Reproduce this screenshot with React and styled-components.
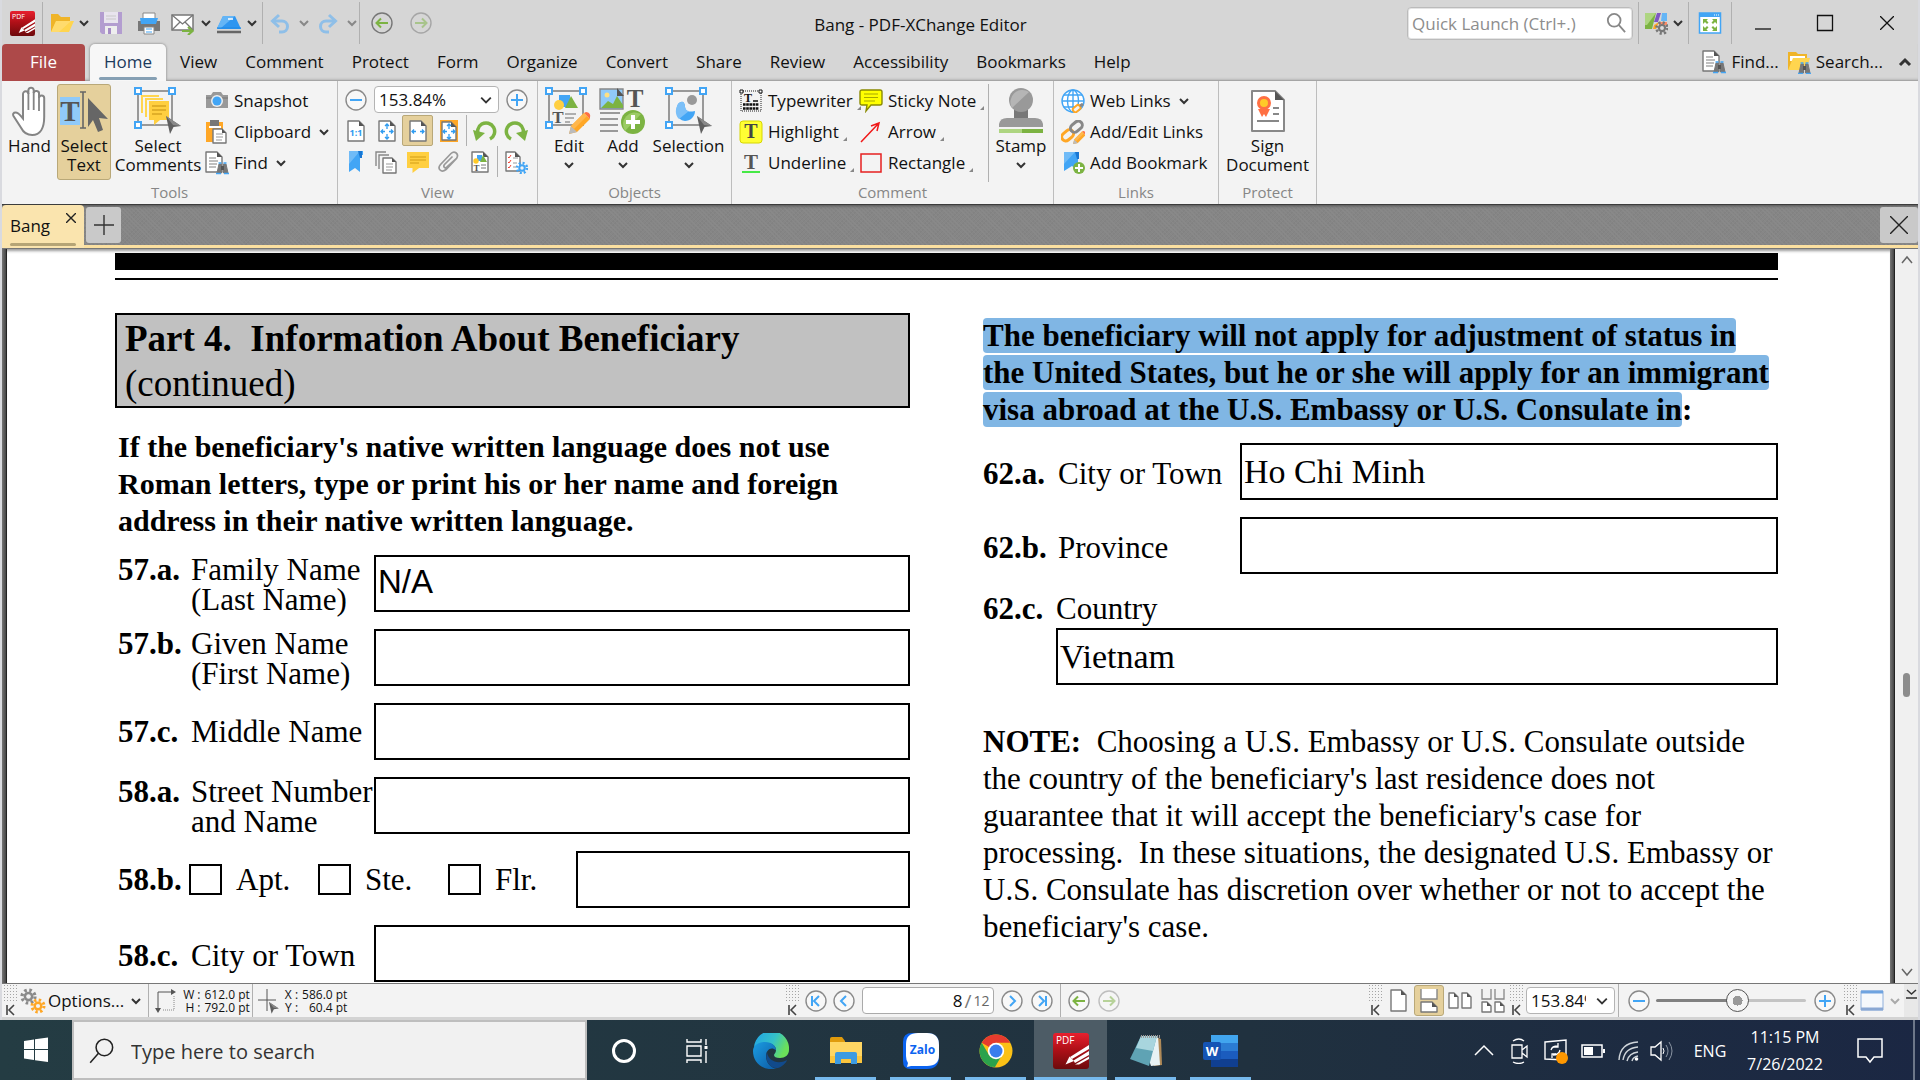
import React from "react";
import styled, { createGlobalStyle, css } from "styled-components";

const UI = `"Open Sans", "Noto Sans", sans-serif`;
const SERIF = `"Liberation Serif", "Times New Roman", serif`;

const Global = createGlobalStyle`
  * { box-sizing: border-box; }
  html, body { margin: 0; height: 100%; overflow: hidden; }
  body { background: #d9dadf; font-family: ${UI}; font-size: 17px; color: #111; }
  button, input, select { font-family: inherit; font-size: inherit; color: inherit; margin: 0; }
  button { border: 0; padding: 0; background: none; cursor: default; }
  svg { display: block; flex: none; }
`;

/* ---------- icons ---------- */
const Svg = ({ w = 24, h = w, box = `0 0 ${w} ${h}`, children, ...rest }) => (
  <svg width={w} height={h} viewBox={box} fill="none" aria-hidden="true" {...rest}>{children}</svg>
);
const Chevron = ({ color = "#333", w = 10, sw = 2 }) => (
  <Svg w={w} h={w} box="0 0 10 10"><path d="M1 3l4 4 4-4" stroke={color} strokeWidth={sw} /></Svg>
);
const Gear = ({ x, y, r, color, hole = "#f3f3f3" }) => (
  <g>
    <circle cx={x} cy={y} r={r} stroke={color} strokeWidth={r * 0.5} strokeDasharray={`${r * 0.3927} ${r * 0.3927}`} />
    <circle cx={x} cy={y} r={r * 0.75} fill={color} />
    <circle cx={x} cy={y} r={r * 0.35} fill={hole} />
  </g>
);
const PageShape = ({ x = 0, y = 0, w = 15, h = 20, fill = "#fff", color = "#777", sw = 1.4, k = 5 }) => (
  <g transform={`translate(${x} ${y})`}>
    <path d={`M0 0H${w - k}L${w} ${k}V${h}H0Z`} fill={fill} stroke={color} strokeWidth={sw} strokeLinejoin="round" />
    <path d={`M${w - k} 0L${w} ${k}H${w - k}Z`} fill="#555" />
  </g>
);
const Binoculars = ({ x, y }) => (
  <g transform={`translate(${x} ${y})`}>
    <path d="M1 11L3 2H5.500V11ZM12 11L10 2H7.500V11Z" fill="#777" stroke="#777" />
    <path d="M5 4h3v4H5z" fill="#555" />
    <path d="M2.500 1h3M7.500 1h3M0 11.500h5M8 11.500h5" stroke="#42a5f5" strokeWidth="1.500" />
  </g>
);
const Handles = ({ s = 34 }) => (
  <g>
    <rect x="4" y="4" width={s} height={s} stroke="#999" strokeWidth="2" />
    {[[4, 4], [4 + s, 4], [4, 4 + s]].map(([x, y], i) => (
      <rect key={i} x={x - 3} y={y - 3} width="6" height="6" fill="#fff" stroke="#42a5f5" strokeWidth="2" />
    ))}
  </g>
);
const Cursor = ({ x, y, s = 1 }) => (
  <g transform={`translate(${x} ${y}) scale(${s})`}>
    <path d="M0 0L15 10L7.500 11L4 18Z" fill="#5f5f5f" /><path d="M0 0L15 10L7 9Z" fill="#888" />
  </g>
);
const SerifT = ({ x, y, size = 20, color = "#555" }) => (
  <text x={x} y={y} fontFamily="Liberation Serif, serif" fontWeight="bold" fontSize={size} fill={color} textAnchor="middle">T</text>
);

const AppLogo = ({ w = 24, h = w }) => (
  <Svg w={w} h={h} box="0 0 36 36">
    <defs><linearGradient id="pdfred" x1="0" y1="0" x2="0" y2="1"><stop offset="0" stopColor="#e8202e" /><stop offset=".45" stopColor="#b01018" /><stop offset="1" stopColor="#6d0a0c" /></linearGradient></defs>
    <rect width="36" height="36" rx="3" fill="url(#pdfred)" />
    <text x="3" y="11" fontFamily="Open Sans, sans-serif" fontSize="10" fill="#fff">PDF</text>
    <path d="M12.500 31.500l4-8 4.500 4.500z" fill="#fff" />
    <path d="M17 24L36 12v4L19 26zM20.500 27.500L36 18v4L22 30z" fill="#fff" />
    <path d="M22 31.500h4L36 26v-2.500z" fill="#fff" />
  </Svg>
);
const Folder = () => (
  <Svg w={24}><path d="M1 21V3h7l3 3h9v4L5 21z" fill="#efb428" /><path d="M6 10h18l-5 11H1z" fill="#ffd54f" /><path d="M6 10h15L9 21H1z" fill="#ffe082" opacity=".6" /></Svg>
);
const Save = () => (
  <Svg w={24}><path d="M1 1h22v22H3l-2-2z" fill="#b39dd0" /><rect x="5" y="1" width="14" height="11" fill="#e8e4ee" /><path d="M7 5h10M7 8h10" stroke="#c8c8c8" /><rect x="6" y="15" width="12" height="8" fill="#eee" /><rect x="9" y="17" width="3" height="6" fill="#a58cc5" /></Svg>
);
const Print = () => (
  <Svg w={24}><path d="M6 2h12v7H6z" fill="#fff" stroke="#888" /><path d="M1 10h22v10H1z" fill="#777" /><path d="M4 13h15l2-6H3z" fill="#42a5f5" /><path d="M7 16h10v7H7z" fill="#fff" stroke="#888" /><path d="M9 18h6M9 21h6" stroke="#42a5f5" /></Svg>
);
const Mail = () => (
  <Svg w={24}><path d="M1 4h21v15H1z" fill="#fff" stroke="#777" strokeWidth="1.500" /><path d="M1 4l10.500 9L22 4M1 19l8-8M22 19l-8-8" stroke="#777" strokeWidth="1.300" /><path d="M11 20h10M17 16l4.500 4-4.500 4" stroke="#7cb342" strokeWidth="2.200" /></Svg>
);
const Scan = () => (
  <Svg w={24}><path d="M6 5h12l6 13H0z" fill="#2f96f0" /><path d="M6 5h12L4 17H0z" fill="#64b5f6" /><path d="M11 8h5" stroke="#fff" strokeWidth="1.500" /><path d="M0 21h24" stroke="#666" strokeWidth="2.500" /><path d="M0 17h24" stroke="#1e88e5" /></Svg>
);
const Undo = ({ flip }) => (
  <Svg w={22}><g transform={flip ? "matrix(-1 0 0 1 22 0)" : undefined} stroke="#8fbfe8" strokeWidth="3"><path d="M2 9h10a5.500 5.500 0 010 11H9" /><path d="M9 3L2.500 9 9 15" /></g></Svg>
);
const CircleIcon = ({ d, color = "#42a5f5", ring = "#8a8a8a", fill = "#f8f8f8", sw = 2 }) => (
  <Svg w={22} h={22} box="0 0 22 22"><circle cx="11" cy="11" r="10" fill={fill} stroke={ring} strokeWidth="1.400" /><path d={d} stroke={color} strokeWidth={sw} /></Svg>
);
const ARROW_L = "M17 11H6M10 6.500L5.500 11l4.500 4.500";
const ARROW_R = "M5 11h11M12 6.500l4.500 4.500-4.500 4.500";
const MINUS = "M5 11h12";
const PLUS = "M5 11h12M11 5v12";

const Magnifier = ({ w = 22, color = "#888", flip, sw = 2 }) => (
  <Svg w={w} h={w} box="0 0 22 22"><g transform={flip ? "matrix(-1 0 0 1 22 0)" : undefined} stroke={color} strokeWidth={sw}><circle cx="9" cy="8" r="7" /><path d="M14 13l7 8" /></g></Svg>
);
const ThemeIcon = () => (
  <Svg w={24}><path d="M1 2h11L8 18H1z" fill="#7cb342" /><path d="M1 2h11L3 14H1z" fill="#aed581" /><path d="M13 2h4l-3 9h-4z" fill="#7e57c2" /><path d="M18 2h5v8h-6z" fill="#64b5f6" /><path d="M10 14l5-3-3 7H9z" fill="#ffa726" /><path d="M15 11h8v3h-8z" fill="#ff8a65" /><Gear x={18} y={17} r={5.500} color="#777" hole="#ddd" /></Svg>
);
const FullScreen = () => (
  <Svg w={24}><path d="M1.500 2h21v20h-21z" fill="#fff" stroke="#42a5f5" strokeWidth="1.500" /><path d="M1 2h22v4H1z" fill="#42a5f5" /><path d="M16 4h5" stroke="#fff" strokeDasharray="1 1" /><path d="M5 8h5l-1.500 1.500 2 2-1.500 1.500-2-2L5 13zM19 8h-5l1.500 1.500-2 2 1.500 1.500 2-2L19 13zM5 20h5l-1.500-1.500 2-2L9 15l-2 2-2-2zM19 20h-5l1.500-1.500-2-2L15 15l2 2 2-2z" fill="#7cb342" /></Svg>
);
const FindIcon = () => (
  <Svg w={24}><PageShape x={1} y={1} w={16} h={20} /><path d="M4 7h7M4 10h9M4 13h8M4 16h7" stroke="#aaa" strokeWidth="1.300" /><Binoculars x={11} y={11} /></Svg>
);
const SearchIcon = () => (
  <Svg w={24}><path d="M1 20V2h8l2 2h9v4z" fill="#efb428" /><path d="M3 6h15v5H3z" fill="#fff" /><path d="M6 8h17l-4 12H1z" fill="#ffd54f" /><Binoculars x={11} y={12} /></Svg>
);
const HandIcon = () => (
  <Svg w={36} h={50} box="0 0 36 50"><path d="M11 30V8a2.700 2.700 0 015.400 0V4a2.700 2.700 0 015.300 0v3a2.700 2.700 0 015.300 1v4a2.600 2.600 0 015.200 0V31c0 11-4 18-12 18-6 0-9-3-11-7L1.500 30c-1-2 0-3.500 2-3.500 3 0 5 3 7.500 6z" fill="#fff" stroke="#848484" strokeWidth="2" /><path d="M16.400 7v17M21.700 6v18M27 11v14" stroke="#848484" strokeWidth="1.800" /></Svg>
);
const SelectTextIcon = () => (
  <Svg w={48} h={48}><rect y="10" width="20" height="28" fill="#90caf9" /><SerifT x={10} y={34} size={29} /><path d="M23 5v36M20 5h6M20 41h6" stroke="#666" strokeWidth="1.600" /><path d="M28 11l20 21-9-1 4 12-5 2-5-12-5 7z" fill="#666" /></Svg>
);
const Bubble = ({ x = 0, y = 0, w = 22, h = 18, fill = "#ffcf40", stroke = "none" }) => (
  <path transform={`translate(${x} ${y})`} d={`M0 0H${w}V${h - 5}H${w * 0.55}L${w * 0.25} ${h}V${h - 5}H0Z`} fill={fill} stroke={stroke} />
);
const SelectCommentsIcon = () => (
  <Svg w={48} h={48}><Handles /><path d="M7 8h18v2H9v16H7zM11 11h18v2H13v17h-2z" fill="#ffd54f" /><Bubble x={15} y={14} w={20} h={24} /><path d="M18 19h14M18 23h14M18 27h10" stroke="#d8a520" strokeWidth="1.500" /><Cursor x={32} y={29} /></Svg>
);
const Camera = () => (
  <Svg w={24}><path d="M1 6h5l2-3h8l2 3h5v13H1z" fill="#999" /><path d="M1 9h22" stroke="#777" /><circle cx="12" cy="12" r="6" fill="#eee" /><circle cx="12" cy="12" r="4.500" fill="#42a5f5" /></Svg>
);
const Clipboard = () => (
  <Svg w={24}><path d="M1 2h17v20H1z" fill="#ffa726" /><path d="M5 0h9v6H5z" fill="#777" /><path d="M4 6h12v2H4z" fill="#fff" /><PageShape x={8} y={9} w={13} h={14} k={4} /><path d="M11 14h7M11 17h7M11 20h6" stroke="#999" /></Svg>
);
const ViewPage = ({ children, bg }) => (
  <Svg w={24}>{bg && <path d="M3 1h18v22H3z" fill={bg} />}<PageShape x={bg ? 5 : 4} y={bg ? 3 : 2} w={bg ? 14 : 16} h={bg ? 18 : 20} />{children}</Svg>
);
const FourWay = () => <path d="M12 5v5M10 7l2-2 2 2M12 20v-5M10 18l2 2 2-2M6 12.500h4M8 10.500l-2 2 2 2M18 12.500h-4M16 10.500l2 2-2 2" stroke="#2e9bf0" strokeWidth="1.300" />;
const Rotate = ({ flip }) => (
  <Svg w={24}><g transform={flip ? "matrix(-1 0 0 1 24 0)" : undefined}><path d="M6 17A8.500 8.500 0 1117 20" stroke="#7cb342" strokeWidth="3.500" /><path d="M0 11l12 3-9 8z" fill="#7cb342" /></g></Svg>
);
const BookmarkIcon = ({ plus }) => (
  <Svg w={24}><path d={plus ? "M3 1h14v19l-6-5-8 5z" : "M5 1h14v4h-3v17l-5-4-6 4z"} fill="#42a5f5" /><path d={plus ? "M3 1h11L3 13z" : "M5 1h11L5 14z"} fill="#90caf9" opacity=".6" /><path d="M14 1h4v7h-2z" fill="#1976d2" />{plus && <g><circle cx="18" cy="17" r="6" fill="#7cb342" /><path d="M14 17h8M18 13v8" stroke="#fff" strokeWidth="2" /></g>}</Svg>
);
const PagesIcon = () => (
  <Svg w={24}><path d="M1 16V2h10M4 19V5h10" stroke="#888" strokeWidth="1.400" /><PageShape x={8} y={8} w={13} h={15} k={4} /><path d="M11 14h7M11 17h7M11 20h6" stroke="#999" /></Svg>
);
const CommentIcon = () => (
  <Svg w={24}><Bubble x={1} y={2} w={22} h={21} /><path d="M4 7h16M4 10h16M4 13h9" stroke="#d19d17" /></Svg>
);
const Clip = () => (
  <Svg w={24}><path d="M20 8L9 19.500c-5 4-9-1-5.500-5L14 3.500c3.500-3.500 8.500.5 5.500 5L10 17c-2.500 2-4-.5-2.500-2.500l8-8" stroke="#999" strokeWidth="1.700" /></Svg>
);
const ContentPage = () => (
  <Svg w={24}><PageShape x={4} y={2} w={16} h={20} /><path d="M9 5h5v6H9z" fill="#42a5f5" /><path d="M15 5l4 7h-7z" fill="#7cb342" /><circle cx="8" cy="11" r="2.700" fill="#ffca28" /><SerifT x={8.500} y={21} size={9} /><path d="M13 15h5M13 18h5" stroke="#777" /></Svg>
);
const TaskPage = () => (
  <Svg w={24}><PageShape x={2} y={2} w={14} h={19} /><path d="M4 7l1 1 2-3M4 12l1 1 2-3M4 17l1 1 2-3" stroke="#f44336" /><path d="M9 8h5M9 13h4M9 17h3" stroke="#999" /><Gear x={18} y={18} r={5} color="#42a5f5" /></Svg>
);
const Shapes = () => <g><path d="M14 8h11v12H14z" fill="#42a5f5" /><path d="M26 9l7 12H20z" fill="#7cb342" /><circle cx="14" cy="18" r="5" fill="#ffcf40" /></g>;
const Pencil = ({ x, y, s = 1 }) => (
  <g transform={`translate(${x} ${y}) scale(${s})`}><path d="M0 22l2-8L15 1l6 6L8 20z" fill="#ffa726" /><path d="M15 1l2-1c3 0 5 3 4 5v2z" fill="#ff7043" /><path d="M0 22l2-8 6 6z" fill="#bbb" /><path d="M2 14L15 1l3 3L5 17z" fill="#ffb74d" /></g>
);
const EditIcon = () => (
  <Svg w={48} h={48}><Handles /><Shapes /><SerifT x={13} y={36} size={17} /><path d="M20 27h11M20 31h9M20 35h5" stroke="#999" strokeWidth="1.600" /><Pencil x={24} y={25} /></Svg>
);
const AddIcon = () => (
  <Svg w={48} h={48}><path d="M1 2h23v20H1z" fill="#90caf9" stroke="#888" strokeWidth="1.400" /><circle cx="8" cy="8" r="2.500" fill="#ffe082" /><path d="M2 21l7-7 5 3 4-8 6 9v3z" fill="#7cb342" /><path d="M18 1l7 8h-7z" fill="#555" /><SerifT x={36} y={20} size={25} /><path d="M1 26h20M1 32h18M1 38h18M1 44h18" stroke="#999" strokeWidth="2" /><circle cx="34" cy="35" r="12" fill="#7cb342" /><path d="M26 44A12 12 0 0142 27z" fill="#9ccc65" /><path d="M27 35h14M34 28v14" stroke="#fff" strokeWidth="4" /></Svg>
);
const SelectionIcon = () => (
  <Svg w={48} h={48}><Handles /><path d="M13 17c4-4 7-2 7 3 1 5 4 5 10 4 0 6-5 10-10 10-9-1-10-11-7-17z" fill="#42a5f5" /><path d="M13 17c4-4 7-2 7 3 1 3 2 4 4 4L14 32c-4-4-4-10-1-15z" fill="#7cc0f8" /><circle cx="27" cy="13" r="5" fill="#999" /><Cursor x={32} y={29} /></Svg>
);
const Typewriter = () => (
  <Svg w={24}><rect x="2" y="2" width="20" height="20" stroke="#222" strokeDasharray="1 1" /><path d="M1 1h3v3H1zM20 1h3v3h-3z" fill="#fff" stroke="#111" /><SerifT x={9} y={13} size={12} color="#111" /><path d="M14 12h5" stroke="#111" strokeWidth="1.500" /><path d="M4 15.500h16M4 19.500h16" stroke="#111" strokeWidth="2.600" strokeDasharray="2.600 .6" /></Svg>
);
const HighlightIcon = () => <Svg w={24}><rect x="1" y="1" width="22" height="22" rx="3" fill="#ff3" stroke="#d6d600" /><SerifT x={12} y={18} size={20} color="#444" /></Svg>;
const UnderlineIcon = () => <Svg w={24}><SerifT x={12} y={18} size={21} /><path d="M3 21h18" stroke="#1be61b" strokeWidth="1.600" /></Svg>;
const Sticky = () => <Svg w={24}><path d="M3 1h18q2 0 2 2v11q0 2-2 2h-9l-5 6 1-6H3q-2 0-2-2V3q0-2 2-2z" fill="#ff0" stroke="#8a8a00" strokeWidth="1.400" /><path d="M5 5h14M5 8.500h14M5 12h11" stroke="#a8a800" strokeWidth="1.200" /></Svg>;
const ArrowIcon = () => <Svg w={24}><path d="M2 22L19 4M12 6l8-3-2 8" stroke="#f01818" strokeWidth="1.500" /></Svg>;
const RectIcon = () => <Svg w={24}><path d="M2 3h20v18H2z" stroke="#e62020" strokeWidth="1.500" /></Svg>;
const StampIcon = () => (
  <Svg w={48} h={48}><path d="M17 22h14v10H17z" fill="#777" /><circle cx="24" cy="13" r="12" fill="#999" /><path d="M15 21A12 12 0 0132 5z" fill="#b5b5b5" /><path d="M2 40v-3q1-6 8-6h28q7 0 8 6v3z" fill="#999" /><path d="M2 44h44" stroke="#7cb342" strokeWidth="4" /><path d="M2 44h23" stroke="#aed581" strokeWidth="4" /></Svg>
);
const WebIcon = () => (
  <Svg w={24}><circle cx="12" cy="12" r="11" fill="#fff" /><g stroke="#42a5f5" strokeWidth="1.400"><circle cx="12" cy="12" r="11" /><ellipse cx="12" cy="12" rx="5.500" ry="11" /><path d="M1 12h22M12 1v22M3 6h18M3 18h18" /></g><rect x="12" y="17" width="8" height="5" rx="2" transform="rotate(-40 16 20)" stroke="#ffa726" strokeWidth="2" fill="#f3f3f3" /><path d="M19 17l3-2" stroke="#888" strokeWidth="3" /></Svg>
);
const LinkIcon = () => (
  <Svg w={24}><g strokeWidth="3"><rect x="0" y="11" width="13" height="8" rx="4" transform="rotate(-40 7 15)" stroke="#ffa726" /><rect x="9" y="3" width="13" height="8" rx="4" transform="rotate(-40 15 7)" stroke="#888" /></g><Pencil x={12} y={11} s={0.600} /></Svg>
);
const SignIcon = () => (
  <Svg w={48} h={48}><PageShape x={8} y={4} w={32} h={40} k={9} sw={2} color="#888" /><path d="M14 22l4 8 2-3 2 3 4-8z" fill="#ff7043" /><circle cx="20" cy="16" r="5.500" fill="#ffca28" stroke="#ff7043" strokeWidth="3" /><path d="M29 21h6M29 27h6M13 34h22" stroke="#888" strokeWidth="1.800" /></Svg>
);
const Grip = () => (
  <Svg w={14} h={32}>
    <defs><pattern id="dots" width="3" height="3" patternUnits="userSpaceOnUse"><rect width="1" height="1" fill="#a5a5a5" /></pattern></defs>
    <rect width="14" height="17" fill="url(#dots)" /><path d="M3 20v10M10 20l-5 5 5 5" stroke="#444" strokeWidth="1.600" />
  </Svg>
);
const OptionsIcon = () => <Svg w={26} h={26}><Gear x={8.500} y={8.500} r={6.500} color="#8a8a8a" /><Gear x={18} y={18} r={6} color="#ffa726" /></Svg>;
const SizeIcon = () => <Svg w={22} h={26}><path d="M3 21V4h14" stroke="#555" /><path d="M16 1l5 3-5 3zM0 20h6l-3 5z" fill="#555" /><path d="M8 22h11V8" stroke="#888" strokeDasharray="1 1" /></Svg>;
const CrossIcon = () => <Svg w={22} h={26}><path d="M9 1v22M0 12h18" stroke="#555" /><Cursor x={11} y={14} s={0.650} /></Svg>;
const SinglePage = () => <Svg w={18} h={24}><PageShape x={1} y={1} w={15} h={21} /></Svg>;
const ContinuousPage = () => <Svg w={18} h={24}><path d="M1 0v10h16V0" fill="#fff" stroke="#888" strokeWidth="1.400" /><PageShape x={1} y={13} w={16} h={10} /></Svg>;
const TwoPages = () => <Svg w={24} h={24}><PageShape x={1} y={4} w={9} h={15} k={4} /><PageShape x={14} y={4} w={9} h={15} k={4} /></Svg>;
const FourPages = () => <Svg w={24} h={24}><path d="M1 0v10h9V0M14 0v10h9V0" stroke="#888" strokeWidth="1.300" /><PageShape x={1} y={13} w={9} h={10} k={4} /><PageShape x={14} y={13} w={9} h={10} k={4} /></Svg>;
const PanelIcon = () => <Svg w={24} h={24}><path d="M1 2h22v19H1z" fill="#f5f8fc" stroke="#8fb0dc" /><path d="M1 3h22" stroke="#6ea3e0" strokeWidth="3" /><path d="M1 20h22" stroke="#8aa8d4" strokeWidth="3" /></Svg>;

const EdgeIcon = () => (
  <Svg w={36} box="0 0 36 36">
    <defs>
      <linearGradient id="eg1" x1="0" y1="0" x2="1" y2=".4"><stop offset="0" stopColor="#1fa2e8" /><stop offset=".6" stopColor="#35c1c8" /><stop offset="1" stopColor="#6be05a" /></linearGradient>
      <linearGradient id="eg2" x1="0" y1="0" x2="1" y2="1"><stop offset="0" stopColor="#1b9de2" /><stop offset="1" stopColor="#0c59a4" /></linearGradient>
    </defs>
    <path d="M1 14A17.500 17.500 0 0136 17c0 5-4 8-9 8-4 0-6-1-6-3 0-1 2-2 2-5 0-4-4-7-9-7-6 0-10 3-13 4z" fill="url(#eg1)" />
    <path d="M0 18c0-6 6-9 12-9 7 0 11 4 11 8-5-4-10 0-10 6 0 7 5 12 11 13C10 38 0 30 0 18z" fill="url(#eg2)" />
    <path d="M14 19c-3 8 3 17 11 16 4-1 8-5 9-8-9 5-19 1-20-8z" fill="#114a8b" />
  </Svg>
);
const ExplorerIcon = () => (
  <Svg w={34} h={30}><path d="M1 3q0-2 2-2h10l3 4v4H1z" fill="#e09b0c" /><path d="M1 6h32v20q0 1-1 1H2q-1 0-1-1z" fill="#ffd663" /><path d="M1 20h32v7H1z" fill="#fbc53d" /><path d="M6 28V18q0-2 2-2h18q2 0 2 2v10h-6v-5H12v5z" fill="#3d9be2" /></Svg>
);
const ZaloIcon = () => (
  <Svg w={36}><path d="M9 0h15q12 0 12 12v12q0 12-12 12H7Q0 36 0 28V9q0-9 9-9z" fill="#0b63f0" /><path d="M15 0h9q12 0 12 12v10q0 11-12 11H8l-4 1 1-4q-2-3-2-7V11Q3 0 15 0z" fill="#fff" /><text x="19.500" y="21" fontFamily="Open Sans, sans-serif" fontWeight="bold" fontSize="12" textAnchor="middle" fill="#0b63f0">Zalo</text></Svg>
);
const ChromeIcon = () => (
  <Svg w={34}><circle cx="17" cy="17" r="16.500" fill="#fbc116" /><path d="M17 17L2.700 8.800A16.500 16.500 0 0131.300 8.800H17z" fill="#e63b2e" /><path d="M2.700 8.800L10 21l7 4-4 8A16.500 16.500 0 012.700 8.800z" fill="#2ba24c" /><path d="M16 33l7-12h-9l-3 11.500z" fill="#2ba24c" /><circle cx="17" cy="17" r="8.200" fill="#fff" /><circle cx="17" cy="17" r="6.500" fill="#3a7ded" /></Svg>
);
const NotepadIcon = () => (
  <Svg w={34} h={34}><path d="M27 3l5 2 1 26-8 1z" fill="#b08a58" /><path d="M12 2h17l2 29-9 1z" fill="#e8f2f4" /><path d="M12 2h16l-8 30L1 25z" fill="#5fa3b4" /><path d="M12 2h16l-4 15L7 14z" fill="#a8d5de" /><path d="M12 2.500h19" stroke="#999" strokeWidth="3" strokeDasharray="1 1" /></Svg>
);
const WordIcon = () => (
  <Svg w={36} h={34}><rect x="8" y="1" width="27" height="32" rx="2" fill="#1b5cbe" /><path d="M8 1h27v8H8z" fill="#41a5ee" /><path d="M8 9h27v8H8z" fill="#2b7cd3" /><path d="M8 25h27v8H8z" fill="#103f91" /><rect y="8" width="18" height="18" rx="2" fill="#1554b5" /><text x="9" y="22" fontFamily="Open Sans, sans-serif" fontWeight="bold" fontSize="13" fill="#fff" textAnchor="middle">W</text></Svg>
);
const StartIcon = () => <Svg w={26} h={26}><path d="M1 4l10-1.500V12H1zM12 2.300L25 .5V12H12zM1 13h10v10L1 21.500zM12 13h13v12l-13-1.700z" fill="#fff" /></Svg>;
const TaskViewIcon = () => <Svg w={26} h={26}><path d="M3 1v3h14V1M3 8h14v10H3zM3 25v-3h14v3M22 1v6M22 13v12" stroke="#fff" strokeWidth="1.400" /><path d="M20.500 8h3v3h-3z" fill="#fff" /></Svg>;
const CortanaIcon = () => <Svg w={26} h={26}><circle cx="13" cy="13" r="10.500" stroke="#fff" strokeWidth="3" /></Svg>;

/* ---------- window frame ---------- */
const Screen = styled.div`display: flex; flex-direction: column; height: 100vh;`;
const Win = styled.div`
  flex: 1; min-height: 0; display: flex; flex-direction: column;
  margin: 0 2px; padding-top: 2px; background: #d6d6d6; border-bottom: 3px solid #d3d3d3;
`;
const TitleBar = styled.header`display: flex; align-items: center; height: 42px; flex: none;`;
const Title = styled.h1`flex: 1; margin: 0; padding-top: 2px; font-size: 17px; font-weight: 400; text-align: center; white-space: nowrap;`;
const Cluster = styled.div`
  display: flex; align-items: center; height: ${p => p.$h || "auto"};
  gap: ${p => p.$gap || 0}px; padding: 0 ${p => p.$pr || 0}px 0 ${p => p.$pl || 0}px;
`;
const Divider = styled.span`width: 1px; flex: none; align-self: stretch; margin: 0 ${p => p.$m || 0}px; background: #b0b0b0;`;
const IconButton = styled.button`
  display: flex; align-items: center; justify-content: center; flex: none;
  width: ${p => p.$w || 24}px; height: ${p => p.$h || 30}px; opacity: ${p => (p.$dim ? 0.5 : 1)};
`;
const Quick = styled.label`
  display: flex; align-items: center; width: 226px; height: 33px; padding: 0 6px 0 4px;
  background: #fff; border: 1px solid #bbb; border-radius: 4px; box-shadow: inset 0 0 0 1px #e4e4e4;
`;
const QuickInput = styled.input`
  flex: 1; min-width: 0; height: 28px; border: 0; padding: 0; outline: 0; background: transparent;
  &::placeholder { color: #8d8d8d; opacity: 1; }
`;

const Menu = styled.nav`display: flex; align-items: stretch; height: 37px; flex: none; box-shadow: inset 0 -1px 0 #a5a5a5, inset 0 -3px 3px -2px #999;`;
const MenuTab = styled.button`
  display: flex; flex-direction: column; align-items: stretch; justify-content: flex-start; text-align: center;
  padding: 3px 14px 0; line-height: 30px; white-space: nowrap;
  ${p => p.$kind === "file" && css`width: 83px; color: #fff; background: #ad4949; border-radius: 4px 4px 0 0; margin-right: 5px;`}
  ${p => p.$kind === "home" && css`
    color: #1c3a5c; background: #f7f7f7; border-radius: 5px 5px 0 0; box-shadow: 0 0 2px 1px #aaa;
    &::after { content: ""; display: block; height: 3px; margin: 0 -5px; border-radius: 2px; background: #86a0b4; }
  `}
`;
const MenuRight = styled.div`margin-left: auto; display: flex; align-items: center; gap: 8px; padding-bottom: 2px;`;
const MenuAction = styled.button`display: flex; align-items: center; gap: 5px; line-height: 24px;`;

/* ---------- ribbon ---------- */
const Ribbon = styled.section`display: flex; height: 124px; flex: none; background: #f3f3f3; border-bottom: 1px solid #3c3c3c;`;
const Group = styled.div`
  flex: 0 0 ${p => p.$w}px; display: flex; flex-direction: column;
  border-right: 1px solid #bdbdbd; padding-top: 3px;
`;
const GroupBody = styled.div`display: flex; align-items: flex-start; height: 98px; padding-left: ${p => p.$pl || 0}px;`;
const GroupName = styled.div`font-size: 15px; line-height: 20px; text-align: center; color: #868686;`;
const Big = styled.button`
  display: flex; flex-direction: column; align-items: center; justify-content: flex-start;
  width: ${p => p.$w}px; height: 96px; padding-top: 1px; line-height: 19px; white-space: nowrap;
  border: 1px solid ${p => (p.$on ? "#b9a878" : "transparent")}; border-radius: 3px;
  background: ${p => (p.$on ? "#e5d09c" : "transparent")};
`;
const BigIcon = styled.span`height: 50px; display: flex; align-items: center;`;
const BigChevron = styled.span`padding-top: 5px;`;
const Column = styled.div`display: flex; flex-direction: column; padding-top: 1px; width: ${p => p.$w}px;`;
const Small = styled.button`display: flex; align-items: center; gap: 5px; height: 31px; white-space: nowrap;`;
const SmallArrow = styled.span`padding-left: 3px;`;
const Corner = styled.span`align-self: flex-end; margin: 0 0 6px -1px; border-left: 4px solid transparent; border-bottom: 4px solid #888;`;
const ViewGrid = styled.div`display: flex; flex-direction: column;`;
const ViewRow = styled.div`display: flex; align-items: center; height: 31px; gap: ${p => p.$gap || 0}px; padding-left: ${p => p.$pl || 0}px;`;
const Cell = styled.button`
  width: 31px; height: 31px; display: flex; align-items: center; justify-content: center; border-radius: 2px;
  border: 1px solid ${p => (p.$on ? "#b9a878" : "transparent")}; background: ${p => (p.$on ? "#e5d09c" : "transparent")};
`;
const Combo = styled.span`
  display: grid; align-items: center; width: ${p => p.$w}px; height: 27px; background: #fff;
  border: 1px solid #b4b4b4; border-radius: 4px;
  > * { grid-area: 1 / 1; }
  > svg { justify-self: end; margin-right: 6px; pointer-events: none; }
`;
const Select = styled.select`
  appearance: none; width: 100%; min-width: 0; height: 25px; border: 0; outline: 0; background: transparent;
  padding: 0 ${p => p.$pr || 24}px 0 4px; line-height: 25px;
`;

/* ---------- document tabs ---------- */
const TabStrip = styled.div`
  display: flex; height: 43px; flex: none; border-bottom: 3px solid #fbe0a0;
  background-color: #868686;
  background-image: repeating-linear-gradient(45deg, #898989 0 1px, transparent 1px 3px), repeating-linear-gradient(-45deg, #828282 0 1px, transparent 1px 3px);
  box-shadow: inset 0 3px 3px -2px #555;
`;
const DocTab = styled.button`
  width: 82px; height: 43px; padding: 5px 8px 0; background: #fae4ae; border-radius: 4px 4px 0 0;
  display: grid; grid-template-columns: 1fr auto; text-align: left;
  &::after { content: ""; grid-column: 1 / 3; height: 3px; border-radius: 2px; background: #b5a476; }
`;
const DocTabName = styled.span`line-height: 31px;`;
const TabClose = styled.span`padding-top: 3px;`;
const StripButton = styled.button`
  display: flex; align-items: center; justify-content: center; width: ${p => p.$w}px; height: 36px;
  margin: 2px 0 0 2px; background: #c9c9c9; border-radius: 3px;
  ${p => p.$end && css`margin-left: auto;`}
`;

/* ---------- document ---------- */
const Viewer = styled.main`flex: 1; min-height: 0; display: flex; border-top: 1px solid #777; border-bottom: 1px solid #777;`;
const Edge = styled.div`width: 5px; flex: none; background: linear-gradient(90deg, #777, #444); border-right: 1px solid #222;`;
const Page = styled.article`
  flex: 1; min-width: 0; overflow: hidden; padding: 4px 112px 0 108px; background: #fff;
  box-shadow: inset 0 4px 3px -2px #999; font-family: ${SERIF}; font-size: 31px; line-height: 37px; color: #000;
`;
const BlackBar = styled.div`height: 17px; background: #000; margin-bottom: 8px;`;
const Rule = styled.div`height: 2px; background: #000; margin-bottom: 33px;`;
const Columns = styled.div`display: grid; grid-template-columns: 1fr 1fr; column-gap: 73px; align-items: start;`;
const PartHead = styled.h2`
  margin: 0 0 20px; height: 95px; padding: 1px 8px; border: 2px solid #000; background: #c1c1c1;
  font-size: 37px; line-height: 45px; white-space: pre;
`;
const Plain = styled.span`font-weight: 400;`;
const Lead = styled.p`margin: 0 0 16px; padding-left: 3px; font-size: 30px; font-weight: 700; white-space: nowrap;`;
const Fields = styled.div`display: flex; flex-direction: column; gap: 17px;`;
const Row = styled.div`
  display: grid; grid-template-columns: ${p => p.$cols || "73px 183px 1fr"}; padding-left: ${p => p.$pl ?? 3}px;
  align-items: ${p => (p.$top ? "start" : "center")}; line-height: 30px; white-space: nowrap; height: 57px;
  > b, > label { padding-top: ${p => (p.$drop ? 4 : 0)}px; }
`;
const Num = styled.b``;
const Box = styled.input`
  width: 100%; height: 57px; min-width: 0; border: 2px solid #000; border-radius: 0; background: #fff; outline: 0;
  padding: 0 2px; font-family: ${SERIF}; font-size: 34px;
  ${p => p.$sans && css`font-family: "Liberation Sans", Arial, sans-serif; font-size: 33px; padding-bottom: 4px;`}
`;
const Tick = styled.input`
  appearance: none; width: 33px; height: 31px; border: 2px solid #000; background: #fff; margin: 0 14px 0 0; flex: none;
`;
const Choices = styled.div`display: grid; grid-template-columns: 129px 130px 1fr;`;
const Choice = styled.label`display: flex; align-items: center;`;
const Notice = styled.p`margin: 4px 0 15px; font-weight: 700; white-space: nowrap;`;
const Mark = styled.mark`color: inherit; background: #80b6e4; border-radius: 4px;`;
const CountryRow = styled.div`display: grid; grid-template-columns: 73px 1fr; line-height: 38px; margin-top: -1px;`;
const Note = styled.p`margin: 38px 0 0; white-space: pre;`;
const Scroll = styled.div`
  width: 23px; flex: none; display: grid; grid-template-rows: auto 412fr 24px 273fr auto; justify-items: center;
  padding: 6px 0; background: #f0f0f0;
`;
const Thumb = styled.span`grid-row: 3; width: 7px; border-radius: 4px; background: #8c8c8c;`;

/* ---------- status bar ---------- */
const Status = styled.footer`display: flex; height: 33px; flex: none; background: #f3f3f3;`;
const StatusGrid = styled.div`flex: 1; display: grid; grid-template-columns: 1fr auto 1fr; align-items: center;`;
const Measure = styled.span`display: grid; grid-template-columns: auto auto; column-gap: 4px; font-size: 12px; line-height: 13px; text-align: right; white-space: nowrap;`;
const PageBox = styled.label`
  display: flex; align-items: center; width: 132px; height: 27px; padding-right: 3px; background: #fff;
  border: 1px solid #aaa; border-radius: 4px; color: #666; font-size: 14px;
`;
const PageInput = styled.input`flex: 1; min-width: 0; height: 25px; border: 0; outline: 0; padding: 0; background: none; text-align: right; font-size: 17px; color: #111;`;
const Slash = styled.span`font-size: 19px; padding: 0 2px; color: #777;`;
const Slider = styled.input`
  appearance: none; width: 150px; height: 24px; background: transparent;
  &::-webkit-slider-runnable-track { height: 3px; border-radius: 2px; background: linear-gradient(90deg, #808080 54%, #c4c4c4 54%); }
  &::-webkit-slider-thumb {
    appearance: none; width: 23px; height: 23px; margin-top: -10px; border-radius: 50%;
    border: 1px solid #555; background: radial-gradient(circle, #999 0 5px, #f6f6f6 5px);
  }
`;
const Overflow = styled.button`width: 14px; background: #e8e8e8; display: flex; align-items: center; justify-content: center; padding-bottom: 12px;`;
const ModeButton = styled.button`
  display: flex; align-items: center; justify-content: center; height: 31px; width: ${p => p.$w}px;
  border: 1px solid ${p => (p.$on ? "#b9a878" : "transparent")}; border-radius: 3px; background: ${p => (p.$on ? "#e5d09c" : "transparent")};
`;
const RightStatus = styled(Cluster)`justify-content: flex-end;`;

/* ---------- taskbar ---------- */
const Taskbar = styled.footer`display: flex; height: 60px; flex: none; color: #fff; background: linear-gradient(90deg, #243c43, #20313f 65%, #1b2743);`;
const Start = styled.button`width: 72px; display: flex; align-items: center; justify-content: center;`;
const SearchBox = styled.label`display: flex; align-items: center; width: 515px; padding: 2px 0 0 15px; gap: 16px; background: #f1f1f1; border: 2px solid #bebebe; color: #222;`;
const SearchInput = styled.input`
  flex: 1; height: 32px; border: 0; outline: 0; padding: 0; background: none; font-size: 20px;
  &::placeholder { color: #333; opacity: 1; }
`;
const Task = styled.button`
  width: ${p => (p.$active ? 73 : 61)}px; margin: 0 ${p => (p.$active ? 1 : 7)}px; display: flex; align-items: center; justify-content: center;
  background: ${p => (p.$active ? "#4d5c66" : "transparent")};
  border-bottom: 3px solid ${p => (p.$open ? "#76b9ed" : "transparent")}; padding-top: 4px;
`;
const Tools = styled.div`display: flex; > * { margin: 0 6px; }`;
const Tasks = styled.div`display: flex;`;
const Tray = styled.div`margin-left: auto; display: flex; align-items: center; font-size: 16px;`;
const TrayItem = styled.button`width: ${p => p.$w}px; padding-top: 2px; display: flex; align-items: center; justify-content: center; line-height: 27px; text-align: center;`;
const ShowDesktop = styled.button`width: 7px; align-self: stretch; border-left: 2px solid #6d7789;`;

const MENU = ["View", "Comment", "Protect", "Form", "Organize", "Convert", "Share", "Review", "Accessibility", "Bookmarks", "Help"];

const SmallItem = ({ icon, children, arrow, corner }) => (
  <Small>{icon}<span>{children}</span>{arrow && <SmallArrow><Chevron /></SmallArrow>}{corner && <Corner />}</Small>
);
const BigItem = ({ w, icon, lines, arrow, on }) => (
  <Big $w={w} $on={on}>
    <BigIcon>{icon}</BigIcon>
    {lines.map(l => <span key={l}>{l}</span>)}
    {arrow && <BigChevron><Chevron /></BigChevron>}
  </Big>
);
const FieldRow = ({ num, lines, id, value = "", sans, cols, drop, pl }) => (
  <Row $top={lines.length > 1} $cols={cols} $drop={drop} $pl={pl}>
    <Num>{num}</Num>
    <label htmlFor={id}>{lines.map((l, i) => <React.Fragment key={l}>{i > 0 && <br />}{l}</React.Fragment>)}</label>
    <Box id={id} defaultValue={value} $sans={sans} />
  </Row>
);

function TitleRow() {
  return (
    <TitleBar>
      <Cluster $h="42px" $pl={8}>
        <AppLogo w={25} />
        <Divider $m={7} />
        <IconButton aria-label="Open"><Folder /></IconButton>
        <IconButton $w={20} aria-label="Open recent"><Chevron /></IconButton>
        <IconButton $w={34} aria-label="Save"><Save /></IconButton>
        <IconButton $w={42} aria-label="Print"><Print /></IconButton>
        <IconButton $w={26} aria-label="Email"><Mail /></IconButton>
        <IconButton $w={20} aria-label="Email options"><Chevron /></IconButton>
        <IconButton $w={26} aria-label="Scan"><Scan /></IconButton>
        <IconButton $w={20} aria-label="Scan options"><Chevron /></IconButton>
        <Divider />
        <IconButton $w={36} aria-label="Undo"><Undo /></IconButton>
        <IconButton $w={10} aria-label="Undo list"><Chevron color="#888" /></IconButton>
        <IconButton $w={36} aria-label="Redo"><Undo flip /></IconButton>
        <IconButton $w={14} aria-label="Redo list"><Chevron color="#888" /></IconButton>
        <Divider />
        <IconButton $w={44} aria-label="Previous view"><CircleIcon d={ARROW_L} color="#7cb342" fill="none" ring="#777" /></IconButton>
        <IconButton $w={34} $dim aria-label="Next view"><CircleIcon d={ARROW_R} color="#7cb342" fill="none" ring="#777" /></IconButton>
      </Cluster>
      <Title>Bang - PDF-XChange Editor</Title>
      <Cluster $h="42px" $pl={4}>
        <Quick><QuickInput aria-label="Quick launch" placeholder="Quick Launch (Ctrl+.)" /><Magnifier w={20} /></Quick>
        <Divider $m={5} />
        <IconButton aria-label="Themes"><ThemeIcon /></IconButton>
        <IconButton $w={20} aria-label="Theme list"><Chevron /></IconButton>
        <Divider />
        <IconButton $w={42} aria-label="Full screen"><FullScreen /></IconButton>
        <Divider />
        <IconButton $w={62} aria-label="Minimize"><Svg w={18}><path d="M1 15h16" stroke="#111" strokeWidth="1.300" /></Svg></IconButton>
        <IconButton $w={62} aria-label="Maximize"><Svg w={18}><path d="M1.500 1.500h15v15h-15z" stroke="#111" strokeWidth="1.300" /></Svg></IconButton>
        <IconButton $w={62} aria-label="Close"><Svg w={14}><path d="M0 0l14 14M14 0L0 14" stroke="#111" strokeWidth="1.300" /></Svg></IconButton>
      </Cluster>
    </TitleBar>
  );
}

function RibbonBar() {
  return (
    <Ribbon>
      <Group $w={336}>
        <GroupBody>
          <BigItem w={55} icon={<HandIcon />} lines={["Hand"]} />
          <BigItem w={54} on icon={<SelectTextIcon />} lines={["Select", "Text"]} />
          <BigItem w={94} icon={<SelectCommentsIcon />} lines={["Select", "Comments"]} />
          <Column $w={130}>
            <SmallItem icon={<Camera />}>Snapshot</SmallItem>
            <SmallItem icon={<Clipboard />} arrow>Clipboard</SmallItem>
            <SmallItem icon={<FindIcon />} arrow>Find</SmallItem>
          </Column>
        </GroupBody>
        <GroupName>Tools</GroupName>
      </Group>
      <Group $w={200}>
        <GroupBody $pl={2}>
          <ViewGrid>
            <ViewRow $gap={7} $pl={5}>
              <IconButton $w={22} aria-label="Zoom out"><CircleIcon d={MINUS} /></IconButton>
              <Combo $w={125}><Select aria-label="Zoom"><option>153.84%</option></Select><Chevron w={12} sw={1.500} /></Combo>
              <IconButton $w={22} aria-label="Zoom in"><CircleIcon d={PLUS} /></IconButton>
            </ViewRow>
            <ViewRow>
              <Cell aria-label="Actual size"><ViewPage><text x="12" y="17" fontSize="9" fontFamily="Open Sans, sans-serif" fontWeight="bold" fill="#2e9bf0" textAnchor="middle">1:1</text></ViewPage></Cell>
              <Cell aria-label="Fit page"><ViewPage><FourWay /></ViewPage></Cell>
              <Cell $on aria-label="Fit width"><ViewPage><path d="M6 12.500h4M8 10.500l-2 2 2 2M18 12.500h-4M16 10.500l2 2-2 2" stroke="#2e9bf0" strokeWidth="1.300" /></ViewPage></Cell>
              <Cell aria-label="Fit visible"><ViewPage bg="#ffa726"><FourWay /></ViewPage></Cell>
              <Divider $m={2} />
              <Cell aria-label="Rotate left"><Rotate /></Cell>
              <Cell aria-label="Rotate right"><Rotate flip /></Cell>
            </ViewRow>
            <ViewRow>
              <Cell aria-label="Bookmarks pane"><BookmarkIcon /></Cell>
              <Cell aria-label="Thumbnails pane"><PagesIcon /></Cell>
              <Cell aria-label="Comments pane"><CommentIcon /></Cell>
              <Cell aria-label="Attachments pane"><Clip /></Cell>
              <Cell aria-label="Content pane"><ContentPage /></Cell>
              <Divider $m={2} />
              <Cell aria-label="Properties"><TaskPage /></Cell>
            </ViewRow>
          </ViewGrid>
        </GroupBody>
        <GroupName>View</GroupName>
      </Group>
      <Group $w={194}>
        <GroupBody $pl={4}>
          <BigItem w={54} icon={<EditIcon />} lines={["Edit"]} arrow />
          <BigItem w={54} icon={<AddIcon />} lines={["Add"]} arrow />
          <BigItem w={77} icon={<SelectionIcon />} lines={["Selection"]} arrow />
        </GroupBody>
        <GroupName>Objects</GroupName>
      </Group>
      <Group $w={322}>
        <GroupBody $pl={7}>
          <Column $w={120}>
            <SmallItem icon={<Typewriter />} corner>Typewriter</SmallItem>
            <SmallItem icon={<HighlightIcon />} corner>Highlight</SmallItem>
            <SmallItem icon={<UnderlineIcon />} corner>Underline</SmallItem>
          </Column>
          <Column $w={128}>
            <SmallItem icon={<Sticky />} corner>Sticky Note</SmallItem>
            <SmallItem icon={<ArrowIcon />} corner>Arrow</SmallItem>
            <SmallItem icon={<RectIcon />} corner>Rectangle</SmallItem>
          </Column>
          <Divider $m={1} />
          <BigItem w={62} icon={<StampIcon />} lines={["Stamp"]} arrow />
        </GroupBody>
        <GroupName>Comment</GroupName>
      </Group>
      <Group $w={165}>
        <GroupBody $pl={7}>
          <Column $w={156}>
            <SmallItem icon={<WebIcon />} arrow>Web Links</SmallItem>
            <SmallItem icon={<LinkIcon />}>Add/Edit Links</SmallItem>
            <SmallItem icon={<BookmarkIcon plus />}>Add Bookmark</SmallItem>
          </Column>
        </GroupBody>
        <GroupName>Links</GroupName>
      </Group>
      <Group $w={98}>
        <GroupBody>
          <BigItem w={97} icon={<SignIcon />} lines={["Sign", "Document"]} />
        </GroupBody>
        <GroupName>Protect</GroupName>
      </Group>
    </Ribbon>
  );
}

function FormPage() {
  return (
    <Page>
      <BlackBar />
      <Rule />
      <Columns>
        <div>
          <PartHead>{"Part 4.  Information About Beneficiary\n"}<Plain>(continued)</Plain></PartHead>
          <Lead>
            If the beneficiary's native written language does not use<br />
            Roman letters, type or print his or her name and foreign<br />
            address in their native written language.
          </Lead>
          <Fields>
            <FieldRow num="57.a." id="f57a" lines={["Family Name", "(Last Name)"]} value="N/A" sans />
            <FieldRow num="57.b." id="f57b" lines={["Given Name", "(First Name)"]} />
            <FieldRow num="57.c." id="f57c" lines={["Middle Name"]} />
            <FieldRow num="58.a." id="f58a" lines={["Street Number", "and Name"]} />
            <Row $cols="71px 387px 1fr">
              <Num>58.b.</Num>
              <Choices>
                <Choice><Tick type="checkbox" />Apt.</Choice>
                <Choice><Tick type="checkbox" />Ste.</Choice>
                <Choice><Tick type="checkbox" />Flr.</Choice>
              </Choices>
              <Box aria-label="Unit number" />
            </Row>
            <FieldRow num="58.c." id="f58c" lines={["City or Town"]} drop />
          </Fields>
        </div>
        <div>
          <Notice>
            <Mark>The beneficiary will not apply for adjustment of status in</Mark><br />
            <Mark>the United States, but he or she will apply for an immigrant</Mark><br />
            <Mark>visa abroad at the U.S. Embassy or U.S. Consulate in</Mark>:
          </Notice>
          <Fields>
            <FieldRow num="62.a." id="f62a" lines={["City or Town"]} value="Ho Chi Minh" cols="75px 182px 1fr" drop pl={0} />
            <FieldRow num="62.b." id="f62b" lines={["Province"]} cols="75px 182px 1fr" drop pl={0} />
            <CountryRow>
              <Num>62.c.</Num><label htmlFor="f62c">Country</label>
              <span /><Box id="f62c" defaultValue="Vietnam" />
            </CountryRow>
          </Fields>
          <Note><b>NOTE:</b>{`  Choosing a U.S. Embassy or U.S. Consulate outside
the country of the beneficiary's last residence does not
guarantee that it will accept the beneficiary's case for
processing.  In these situations, the designated U.S. Embassy or
U.S. Consulate has discretion over whether or not to accept the
beneficiary's case.`}</Note>
        </div>
      </Columns>
    </Page>
  );
}

function StatusBar() {
  return (
    <Status>
      <StatusGrid>
        <Cluster $h="33px" $pl={2} $gap={2}>
          <Grip /><OptionsIcon /><span>Options...</span>
          <IconButton $w={20} aria-label="Options list"><Chevron /></IconButton>
          <Divider /><IconButton $w={30} aria-label="Page size"><SizeIcon /></IconButton>
          <Measure><span>W :</span><span>612.0 pt</span><span>H :</span><span>792.0 pt</span></Measure>
          <Divider /><IconButton $w={28} aria-label="Position"><CrossIcon /></IconButton>
          <Measure><span>X :</span><span>586.0 pt</span><span>Y :</span><span>60.4 pt</span></Measure>
        </Cluster>
        <Cluster $h="33px" $gap={6}>
          <Grip />
          <IconButton $w={20} aria-label="First page"><CircleIcon d="M7 6v10M14 6l-5 5 5 5" /></IconButton>
          <IconButton $w={24} aria-label="Previous page"><CircleIcon d="M13 6l-5 5 5 5" /></IconButton>
          <PageBox><PageInput aria-label="Page" defaultValue="8" /><Slash>/</Slash>12</PageBox>
          <IconButton $w={24} aria-label="Next page"><CircleIcon d="M9 6l5 5-5 5" /></IconButton>
          <IconButton $w={24} aria-label="Last page"><CircleIcon d="M15 6v10M8 6l5 5-5 5" /></IconButton>
          <Divider />
          <IconButton $w={24} aria-label="Back"><CircleIcon d={ARROW_L} color="#7cb342" /></IconButton>
          <IconButton $w={24} $dim aria-label="Forward"><CircleIcon d={ARROW_R} color="#7cb342" /></IconButton>
        </Cluster>
        <RightStatus $h="33px">
          <Grip />
          <ModeButton $w={31} aria-label="Single page"><SinglePage /></ModeButton>
          <ModeButton $w={30} $on aria-label="Continuous"><ContinuousPage /></ModeButton>
          <ModeButton $w={31} aria-label="Two pages"><TwoPages /></ModeButton>
          <ModeButton $w={35} aria-label="Two pages continuous"><FourPages /></ModeButton>
          <Grip />
          <Cluster $pl={2}><Combo $w={89}><Select $pr={28} aria-label="Zoom level"><option>153.84%</option></Select><Chevron w={12} sw={1.500} /></Combo></Cluster>
          <Divider $m={3} />
          <IconButton $w={34} aria-label="Zoom out"><CircleIcon d={MINUS} /></IconButton>
          <Slider type="range" min="0" max="100" defaultValue="55" aria-label="Zoom slider" />
          <IconButton $w={38} aria-label="Zoom in"><CircleIcon d={PLUS} /></IconButton>
          <Grip />
          <IconButton $w={28} aria-label="Panel"><PanelIcon /></IconButton>
          <IconButton $w={18} aria-label="Panel list"><Chevron color="#aaa" /></IconButton>
        </RightStatus>
      </StatusGrid>
      <Overflow aria-label="More"><Svg w={11}><path d="M1 1l4.500 4L10 1M0 9h11" stroke="#333" strokeWidth="1.500" /></Svg></Overflow>
    </Status>
  );
}

function TaskBar() {
  return (
    <Taskbar>
      <Start aria-label="Start"><StartIcon /></Start>
      <SearchBox><Magnifier w={26} color="#222" flip sw={1.300} /><SearchInput aria-label="Search" placeholder="Type here to search" /></SearchBox>
      <Tools>
        <Task aria-label="Cortana"><CortanaIcon /></Task>
        <Task aria-label="Task view"><TaskViewIcon /></Task>
      </Tools>
      <Tasks>
        <Task aria-label="Edge"><EdgeIcon /></Task>
        <Task $open aria-label="File Explorer"><ExplorerIcon /></Task>
        <Task $open aria-label="Zalo"><ZaloIcon /></Task>
        <Task $open aria-label="Chrome"><ChromeIcon /></Task>
        <Task $open $active aria-label="PDF-XChange Editor"><AppLogo w={36} /></Task>
        <Task $open aria-label="Notepad"><NotepadIcon /></Task>
        <Task $open aria-label="Word"><WordIcon /></Task>
      </Tasks>
      <Tray>
        <TrayItem $w={36} aria-label="Hidden icons"><Svg w={20}><path d="M1 14l9-9 9 9" stroke="#fff" strokeWidth="1.500" /></Svg></TrayItem>
        <TrayItem $w={36} aria-label="Meet now"><Svg w={20} h={26}><path d="M2 7h10v13H2zM12 12l5-4v11l-5-4M3 3q6-4 11 0M3 24q6 3 11 0" stroke="#fff" strokeWidth="1.300" /></Svg></TrayItem>
        <TrayItem $w={36} aria-label="Updates"><Svg w={26} h={26}><path d="M2 4l21-2v20L2 21z" stroke="#fff" strokeWidth="1.400" /><path d="M8 12q1-4 7-4M15 5v4h-4M17 12q-1 5-7 5M9 20v-4h4" stroke="#fff" strokeWidth="1.300" /><circle cx="19" cy="20" r="6" fill="#ff9800" /></Svg></TrayItem>
        <TrayItem $w={37} aria-label="Battery"><Svg w={24} h={16}><path d="M1 2h20v12H1z" stroke="#fff" strokeWidth="1.500" /><path d="M3 4h9v8H3zM22 6h2v4h-2z" fill="#fff" /></Svg></TrayItem>
        <TrayItem $w={36} aria-label="Network"><Svg w={22} h={22}><path d="M1 20Q2 3 20 2M5 20Q7 8 20 7M9 21q2-8 11-9M14 21q1-4 6-5" stroke="#cfd5da" strokeWidth="1.400" /><circle cx="18.500" cy="19" r="1.800" fill="#fff" /></Svg></TrayItem>
        <TrayItem $w={30} aria-label="Volume"><Svg w={24} h={22}><path d="M1 7h4l6-5v18l-6-5H1z" stroke="#fff" strokeWidth="1.300" /><path d="M13 8q2 3 0 6" stroke="#fff" /><path d="M16 5q4 6 0 12M19 2q6 9 0 18" stroke="#8b95a3" /></Svg></TrayItem>
        <TrayItem $w={66}>ENG</TrayItem>
        <TrayItem $w={84}><span>11:15 PM<br />7/26/2022</span></TrayItem>
        <TrayItem $w={86} aria-label="Notifications"><Svg w={26} h={26}><path d="M1 1h24v18h-8l-4 5-4-5H1z" stroke="#fff" strokeWidth="1.500" /></Svg></TrayItem>
        <ShowDesktop aria-label="Show desktop" />
      </Tray>
    </Taskbar>
  );
}

const CollapseSlot = styled.span`padding-left: 1px;`;
const ArrowSlot = styled.span`grid-row: ${p => (p.$up ? 1 : 5)};`;
const ScrollArrow = ({ up }) => (
  <ArrowSlot $up={up}><Svg w={12} h={10}><path d={up ? "M1 8l5-6 5 6" : "M1 2l5 6 5-6"} stroke="#666" strokeWidth="1.500" /></Svg></ArrowSlot>
);

export default function App() {
  return (
    <Screen>
      <Global />
      <Win>
        <TitleRow />
        <Menu>
          <MenuTab $kind="file">File</MenuTab>
          <MenuTab $kind="home">Home</MenuTab>
          {MENU.map(m => <MenuTab key={m}>{m}</MenuTab>)}
          <MenuRight>
            <MenuAction><FindIcon />Find...</MenuAction>
            <MenuAction><SearchIcon />Search...</MenuAction>
            <CollapseSlot><IconButton $w={26} aria-label="Collapse ribbon"><Svg w={14}><path d="M2 10l5-5 5 5" stroke="#333" strokeWidth="3" /></Svg></IconButton></CollapseSlot>
          </MenuRight>
        </Menu>
        <RibbonBar />
        <TabStrip>
          <DocTab><DocTabName>Bang</DocTabName><TabClose><Svg w={10}><path d="M0 0l10 10M10 0L0 10" stroke="#222" strokeWidth="1.400" /></Svg></TabClose></DocTab>
          <StripButton $w={35} aria-label="New tab"><Svg w={20}><path d="M0 10h20M10 0v20" stroke="#333" strokeWidth="1.400" /></Svg></StripButton>
          <StripButton $w={38} $end aria-label="Close document"><Svg w={18}><path d="M0 0l18 18M18 0L0 18" stroke="#222" strokeWidth="1.400" /></Svg></StripButton>
        </TabStrip>
        <Viewer>
          <Edge />
          <FormPage />
          <Edge />
          <Scroll>
            <ScrollArrow up /><Thumb /><ScrollArrow />
          </Scroll>
        </Viewer>
        <StatusBar />
      </Win>
      <TaskBar />
    </Screen>
  );
}
